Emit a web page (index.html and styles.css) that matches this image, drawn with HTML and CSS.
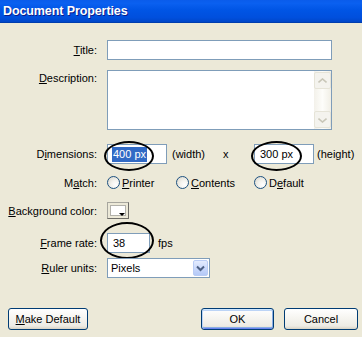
FILE: index.html
```html
<!DOCTYPE html>
<html>
<head>
<meta charset="utf-8">
<link rel="stylesheet" href="styles.css">
</head>
<body>
<div class="titlebar"><span class="title-text">Document Properties</span></div>
<div class="form">
  <div class="row r-title">
    <div class="lbl"><u>T</u>itle:</div>
    <div class="box wide h20"></div>
  </div>
  <div class="row r-desc">
    <div class="lbl lbl-top"><u>D</u>escription:</div>
    <div class="box wide area">
      <div class="vscroll">
        <div class="sbtn"><svg width="9" height="6" viewBox="0 0 9 6"><path d="M0.5 4.5 L4.5 1 L8.5 4.5" fill="none" stroke="#C8C6B8" stroke-width="1.6"/></svg></div>
        <div class="strack"></div>
        <div class="sbtn"><svg width="9" height="6" viewBox="0 0 9 6"><path d="M0.5 1.5 L4.5 5 L8.5 1.5" fill="none" stroke="#C8C6B8" stroke-width="1.6"/></svg></div>
      </div>
    </div>
  </div>
  <div class="row r-dim">
    <div class="lbl">D<u>i</u>mensions:</div>
    <div class="ctrl">
      <div class="box num h20"><span class="sel">400 px</span><div class="ring ring-w"></div></div>
      <span class="unit-w">(width)</span>
      <span class="times">x</span>
      <div class="box num h20"><span class="val">300 px</span><div class="ring ring-h"></div></div>
      <span class="unit-h">(height)</span>
    </div>
  </div>
  <div class="row r-match">
    <div class="lbl">M<u>a</u>tch:</div>
    <div class="ctrl">
      <div class="radio r1"><span class="dot"></span><span><u>P</u>rinter</span></div>
      <div class="radio r2"><span class="dot"></span><span><u>C</u>ontents</span></div>
      <div class="radio"><span class="dot"></span><span>D<u>e</u>fault</span></div>
    </div>
  </div>
  <div class="row r-bg">
    <div class="lbl"><u>B</u>ackground color:</div>
    <div class="swatch"><div class="swatch-in"></div><span class="swatch-arrow"></span></div>
  </div>
  <div class="row r-fps">
    <div class="lbl"><u>F</u>rame rate:</div>
    <div class="ctrl">
      <div class="box fps h20"><span class="val">38</span><div class="ring ring-f"></div></div>
      <span class="fps-unit">fps</span>
    </div>
  </div>
  <div class="row r-ruler">
    <div class="lbl"><u>R</u>uler units:</div>
    <div class="box select h20">
      <span class="val">Pixels</span>
      <div class="dd"><svg width="9" height="7" viewBox="0 0 9 7"><path d="M1 1.5 L4.5 5 L8 1.5" fill="none" stroke="#4D6185" stroke-width="2"/></svg></div>
    </div>
  </div>
  <div class="buttons">
    <div class="btn b-make"><u>M</u>ake Default</div>
    <div class="btn-group">
      <div class="btn b-ok">OK</div>
      <div class="btn b-cancel">Cancel</div>
    </div>
  </div>
</div>
</body>
</html>
```
FILE: styles.css
```css
html, body {
  margin: 0;
  padding: 0;
}
body {
  width: 362px;
  height: 337px;
  overflow: hidden;
  background: #ECE9D8;
  font-family: "Liberation Sans", Arial, sans-serif;
  font-size: 11px;
  color: #000;
}
u { text-decoration: underline; text-underline-offset: 1px; }

.titlebar {
  height: 23px;
  box-sizing: border-box;
  padding-left: 3px;
  display: flex;
  align-items: center;
  background: linear-gradient(#0A5CEB 0%, #0A60F0 15%, #0055E5 45%, #004FDD 80%, #0046C8 100%);
  border-bottom: 1px solid #003DAE;
}
.title-text {
  color: #fff;
  font-weight: bold;
  font-size: 12.5px;
  text-shadow: 1px 1px 0 #0B1C8A;
  letter-spacing: -0.1px;
}

.form {
  padding-top: 17px;
}
.row {
  display: flex;
  align-items: center;
  gap: 10px;
}
.lbl {
  width: 97px;
  flex: none;
  text-align: right;
  white-space: nowrap;
}
.lbl-top { align-self: flex-start; padding-top: 2px; }

.r-desc { margin-top: 10px; align-items: flex-start; }
.r-dim { margin-top: 14px; }
.r-match { margin-top: 11px; height: 15px; }
.r-bg { margin-top: 12px; }
.r-fps { margin-top: 14px; }
.r-ruler { margin-top: 5px; }

.ctrl {
  display: flex;
  align-items: center;
}

.box {
  box-sizing: border-box;
  border: 1px solid #7F9DB9;
  background: #fff;
  position: relative;
  display: flex;
  align-items: center;
}
.h20 { height: 20px; }
.wide { width: 225px; }
.area { height: 60px; justify-content: flex-end; align-items: stretch; }

.vscroll {
  width: 17px;
  display: flex;
  flex-direction: column;
  padding: 1px 0;
  background: linear-gradient(90deg, #F3F1EA, #FDFDFA 50%, #F1EFE6);
}
.sbtn {
  height: 17px;
  box-sizing: border-box;
  border: 1px solid #E6E4D8;
  border-radius: 2px;
  background: #F4F3EE;
  display: flex;
  align-items: center;
  justify-content: center;
}
.strack { flex: 1; }

.num { width: 60px; }
.sel {
  margin-left: 4px;
  background: #316AC5;
  color: #fff;
  padding: 1px 1px 2px;
  line-height: 12px;
}
.val { margin-left: 5px; }
.unit-w { margin-left: 5px; width: 51px; }
.times { width: 31px; }
.unit-h { margin-left: 3px; }

.ring {
  position: absolute;
  border: 2px solid #000;
  border-radius: 50%;
  box-sizing: border-box;
  pointer-events: none;
}
.ring-w { left: -4px; top: -4px; width: 50px; height: 30px; }
.ring-h { left: -4px; top: -4px; width: 51px; height: 30px; }
.ring-f { left: -8px; top: -12px; width: 54px; height: 37px; }

.radio {
  display: flex;
  align-items: center;
  gap: 2px;
}
.r1 { width: 69px; }
.r2 { width: 78px; }
.dot {
  width: 13px;
  height: 13px;
  box-sizing: border-box;
  border: 1px solid #1C5180;
  border-radius: 50%;
  background: radial-gradient(circle at 70% 70%, #FFFFFF 0%, #F4F3EE 40%, #D6D3C8 100%);
}

.swatch {
  width: 22px;
  height: 17px;
  box-sizing: border-box;
  border: 1px solid;
  border-color: #A7A69E #6E6D68 #6E6D68 #A7A69E;
  background: #ECE9D8;
  position: relative;
  padding: 2px;
}
.swatch-in {
  width: 100%;
  height: 100%;
  box-sizing: border-box;
  background: #fff;
  border: 1px solid #B2B1AA;
}
.swatch-arrow {
  position: absolute;
  right: 3px;
  bottom: 2px;
  width: 0;
  height: 0;
  border-left: 3px solid transparent;
  border-right: 3px solid transparent;
  border-top: 3px solid #000;
}

.fps { width: 43px; }
.fps-unit { margin-left: 8px; }

.select { width: 103px; justify-content: space-between; }
.select .val { margin-left: 3px; }
.dd {
  width: 15px;
  height: 16px;
  margin-right: 1px;
  box-sizing: border-box;
  border: 1px solid #B9CCF5;
  border-radius: 2px;
  background: linear-gradient(#E4ECFE, #C6D6FB 60%, #B4C9F7);
  display: flex;
  align-items: center;
  justify-content: center;
}

.buttons {
  margin-top: 30px;
  display: flex;
  justify-content: space-between;
  padding: 0 4px 0 8px;
}
.btn-group { display: flex; gap: 10px; }
.btn {
  height: 22px;
  box-sizing: border-box;
  border: 1px solid #003C74;
  border-radius: 3px;
  background: linear-gradient(#FFFFFF 0%, #F7F6F2 40%, #EDEBE4 85%, #D8D2C4 100%);
  display: flex;
  align-items: center;
  justify-content: center;
}
.b-make { width: 80px; }
.b-ok {
  width: 73px;
  box-shadow: inset 0 1px 0 #CEE7FF, inset 1px 0 0 #BCD4F6, inset -1px 0 0 #89ADE4, inset 0 -1px 0 #6982EE, inset 0 2px 0 #BCD4F6, inset 0 -2px 0 #89ADE4;
}
.b-cancel { width: 74px; }
```
